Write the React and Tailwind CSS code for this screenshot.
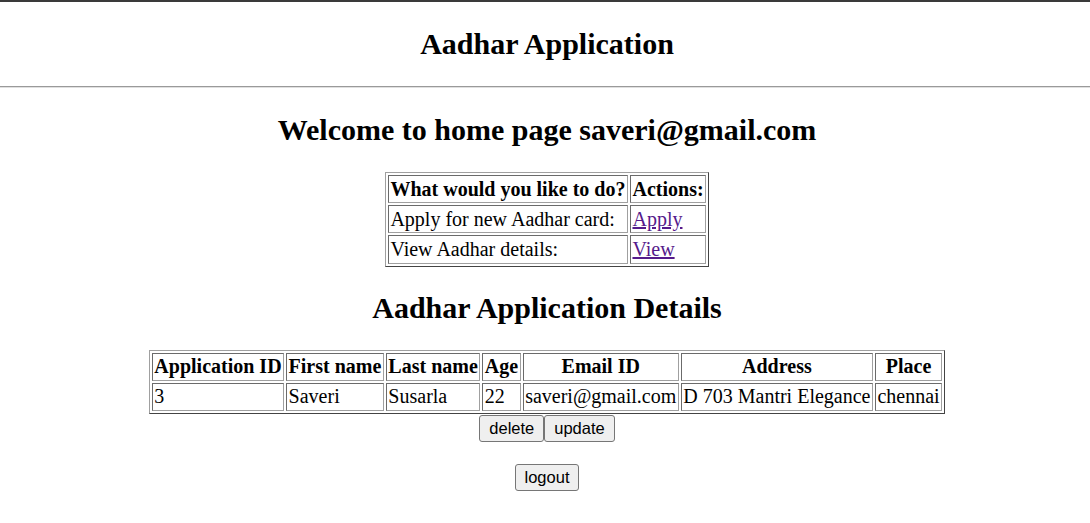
export default function App() {
  const th = "border border-t-[#6b6b6b] border-l-[#6b6b6b] border-r-[#a0a0a0] border-b-[#a0a0a0] px-[1.5px] py-[1.5px] font-bold text-center";
  const td = "border border-t-[#6b6b6b] border-l-[#6b6b6b] border-r-[#a0a0a0] border-b-[#a0a0a0] px-[1.5px] py-[1.5px] text-left";
  const table = "border-separate border-spacing-[2.5px] border border-t-[#a0a0a0] border-l-[#a0a0a0] border-r-[#444] border-b-[#444] mx-auto text-[20px] leading-[23.2px]";
  const btn = "font-['Liberation_Sans',Arial,sans-serif] text-[16.5px] leading-[19px] bg-[#efefef] border border-[#767676] rounded-[3px] px-[9px] py-[3px] text-black";
  return (
    <div className="min-h-[523px] bg-white text-black font-['Liberation_Serif','Times_New_Roman',serif]">
      <div className="border-t-2 border-[#3a3a3a]">
        <div className="h-[84px] flex items-center justify-center pl-[4px]">
          <h2 className="text-[30px] font-bold leading-[34px]">Aadhar Application</h2>
        </div>
        <div className="border-t border-[#9a9a9a] border-b border-b-[#e0e0e0]"></div>
      </div>
      <div className="pl-[4px]">
        <h1 className="mt-[25px] text-center text-[30px] font-bold leading-[34px]">Welcome to home page saveri@gmail.com</h1>
        <table className={table + " mt-[25px]"}>
          <tbody>
            <tr>
              <th className={th}>What would you like to do?</th>
              <th className={th}>Actions:</th>
            </tr>
            <tr>
              <td className={td}>Apply for new Aadhar card:</td>
              <td className={td}><a href="#" className="text-[#551a8b] underline">Apply</a></td>
            </tr>
            <tr>
              <td className={td}>View Aadhar details:</td>
              <td className={td}><a href="#" className="text-[#551a8b] underline">View</a></td>
            </tr>
          </tbody>
        </table>
        <h2 className="mt-[24px] text-center text-[30px] font-bold leading-[34px]">Aadhar Application Details</h2>
        <table className={table + " mt-[25px]"}>
          <tbody>
            <tr>
              <th className={th}>Application ID</th>
              <th className={th}>First name</th>
              <th className={th}>Last name</th>
              <th className={th}>Age</th>
              <th className={th}>Email ID</th>
              <th className={th}>Address</th>
              <th className={th}>Place</th>
            </tr>
            <tr>
              <td className={td}>3</td>
              <td className={td}>Saveri</td>
              <td className={td}>Susarla</td>
              <td className={td}>22</td>
              <td className={td}>saveri@gmail.com</td>
              <td className={td}>D 703 Mantri Elegance</td>
              <td className={td}>chennai</td>
            </tr>
          </tbody>
        </table>
        <div className="flex justify-center mt-[1px]">
          <button className={btn}>delete</button>
          <button className={btn}>update</button>
        </div>
        <div className="flex justify-center mt-[22px]">
          <button className={btn}>logout</button>
        </div>
      </div>
    </div>
  );
}
